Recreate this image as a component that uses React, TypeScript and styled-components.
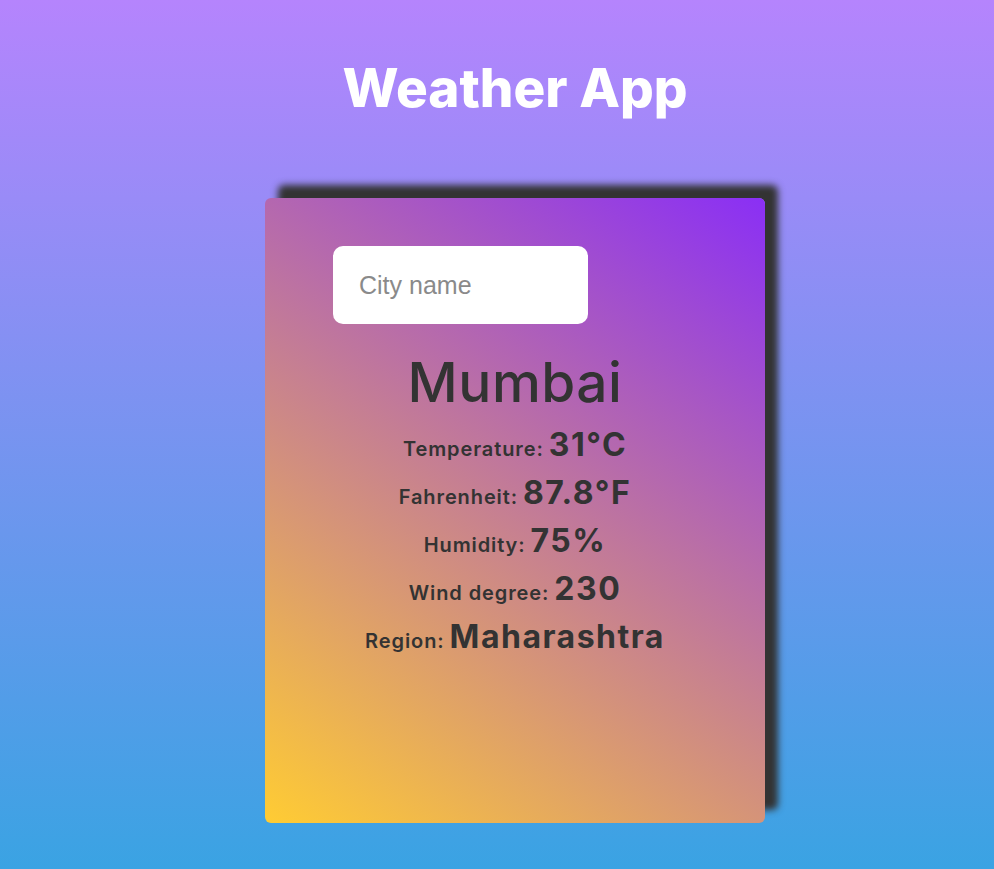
import styled, { createGlobalStyle } from "styled-components";
import React, { useState } from "react";

const GlobalStyle = createGlobalStyle`
  html, body {
    margin: 0;
    padding: 0;
  }
  body {
    font-family: "Inter", "DejaVu Sans", sans-serif;
    background: linear-gradient(to bottom, #b584fd 0%, #3aa3e3 100%);
    min-height: 869px;
  }
`;

const weather = {
  city: "Mumbai",
  rows: [
    { label: "Temperature:", value: "31°C" },
    { label: "Fahrenheit:", value: "87.8°F" },
    { label: "Humidity:", value: "75%" },
    { label: "Wind degree:", value: "230" },
    { label: "Region:", value: "Maharashtra" },
  ],
};

export default function App() {
  const [city, setCity] = useState("");

  return (
    <>
      <GlobalStyle />
      <SPage>
        <STitle>Weather App</STitle>
        <SCard>
          <SInput
            type="text"
            placeholder="City name"
            value={city}
            onChange={(e: React.ChangeEvent<HTMLInputElement>) => setCity(e.target.value)}
          />
          <SCity>{weather.city}</SCity>
          <SRows>
            {weather.rows.map((r) => (
              <SRow key={r.label}>
                <SLabel>{r.label}</SLabel> <SValue>{r.value}</SValue>
              </SRow>
            ))}
          </SRows>
        </SCard>
      </SPage>
    </>
  );
}

const SPage = styled.div`
  display: flex;
  flex-direction: column;
  align-items: center;
  min-height: 869px;
  padding: 58px 0 0 36px;
  box-sizing: border-box;
`;

const STitle = styled.h1`
  margin: 0;
  color: #fff;
  font-size: 53px;
  font-weight: 800;
  line-height: 60px;
`;

const SCard = styled.div`
  margin-top: 80px;
  width: 500px;
  height: 625px;
  box-sizing: border-box;
  padding: 48px 0 0 68px;
  border-radius: 6px;
  background: linear-gradient(35deg, #ffcc33 0%, #8a2ff5 100%);
  box-shadow: 13px -13px 7px #333;
  display: flex;
  flex-direction: column;
`;

const SInput = styled.input`
  width: 255px;
  height: 78px;
  box-sizing: border-box;
  border: none;
  outline: none;
  border-radius: 10px;
  padding: 0 26px;
  font-family: "Liberation Sans", Arial, sans-serif;
  font-size: 25px;
  color: #333;
  &::placeholder {
    color: #8a8a8a;
  }
`;

const SCity = styled.div`
  margin: 28px 0 0 -68px;
  text-align: center;
  color: #333;
  font-size: 55px;
  font-weight: 500;
  line-height: 60px;
  letter-spacing: 0.5px;
`;

const SRows = styled.div`
  margin: 13px 0 0 -68px;
  display: flex;
  flex-direction: column;
  align-items: center;
`;

const SRow = styled.div`
  height: 48px;
  display: flex;
  align-items: baseline;
  gap: 5px;
  color: #333;
`;

const SLabel = styled.span`
  font-size: 20px;
  font-weight: 600;
  letter-spacing: 0.9px;
`;

const SValue = styled.span`
  font-size: 32px;
  font-weight: 700;
  letter-spacing: 1.5px;
`;
